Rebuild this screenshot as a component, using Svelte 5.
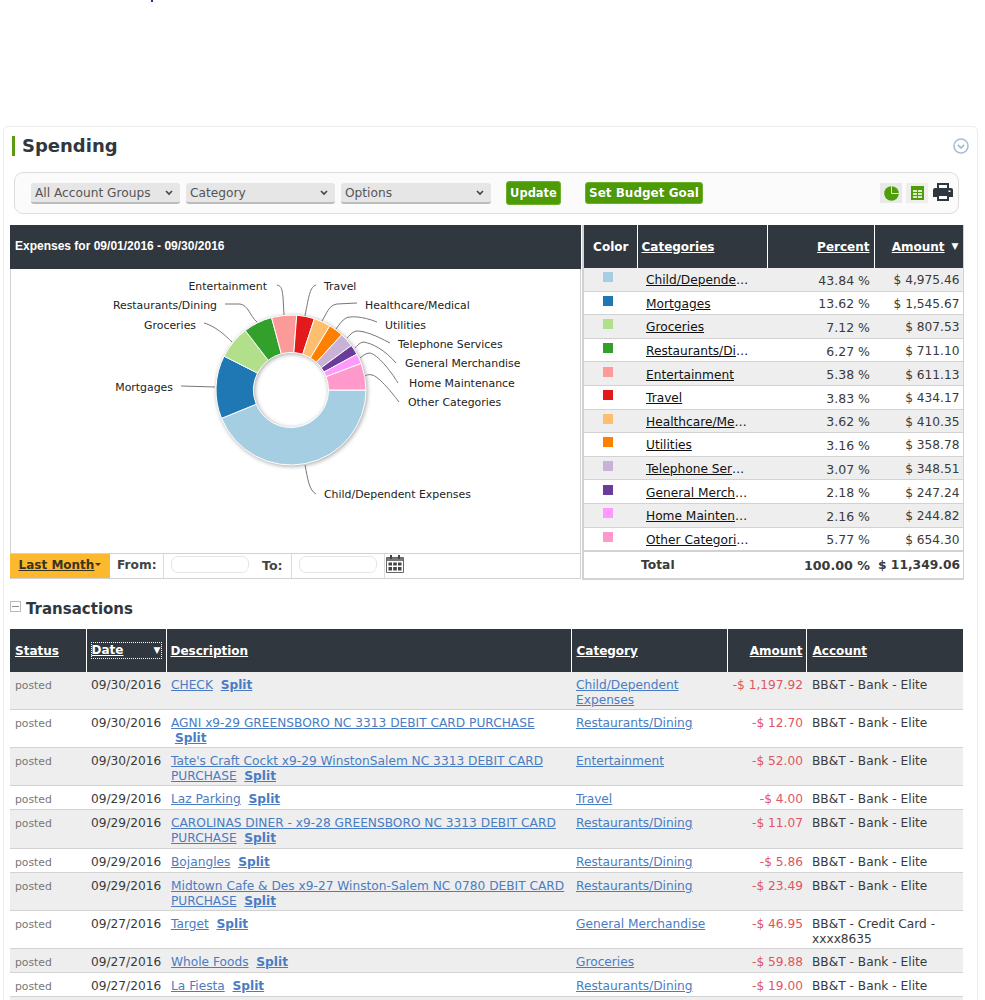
<script lang="ts">
  const slices = [
    { name: 'Child/Dependent Expenses', color: '#a6cee3', percent: 43.84, amount: '4,975.46' },
    { name: 'Mortgages', color: '#1f78b4', percent: 13.62, amount: '1,545.67' },
    { name: 'Groceries', color: '#b2df8a', percent: 7.12, amount: '807.53' },
    { name: 'Restaurants/Dining', color: '#33a02c', percent: 6.27, amount: '711.10' },
    { name: 'Entertainment', color: '#fb9a99', percent: 5.38, amount: '611.13' },
    { name: 'Travel', color: '#e31a1c', percent: 3.83, amount: '434.17' },
    { name: 'Healthcare/Medical', color: '#fdbf6f', percent: 3.62, amount: '410.35' },
    { name: 'Utilities', color: '#ff7f00', percent: 3.16, amount: '358.78' },
    { name: 'Telephone Services', color: '#cab2d6', percent: 3.07, amount: '348.51' },
    { name: 'General Merchandise', color: '#6a3d9a', percent: 2.18, amount: '247.24' },
    { name: 'Home Maintenance', color: '#ff99ff', percent: 2.16, amount: '244.82' },
    { name: 'Other Categories', color: '#ff99cc', percent: 5.77, amount: '654.30' },
  ];

  // label position and leader line, in chart coordinates
  const labels = [
    { text: 'Entertainment', x: 257, y: 17, end: true, line: 'M267 16C272 17 272 21 273 28L274 46' },
    { text: 'Restaurants/Dining', x: 207, y: 36, end: true, line: 'M215 35L230 35C238 36 240 47 247 53' },
    { text: 'Groceries', x: 186, y: 56, end: true, line: 'M194 54C205 57 215 66 222 73' },
    { text: 'Mortgages', x: 163, y: 118, end: true, line: 'M171 117L205 118' },
    { text: 'Travel', x: 314, y: 17, end: false, line: 'M306 16C300 18 299 26 295 47' },
    { text: 'Healthcare/Medical', x: 355, y: 36, end: false, line: 'M347 34L327 35C319 36 317 44 312 52' },
    { text: 'Utilities', x: 375, y: 56, end: false, line: 'M367 53C352 47 340 47 336 49C332 51 329 56 326 60' },
    { text: 'Telephone Services', x: 388, y: 75, end: false, line: 'M380 74C365 66 355 62 346 62C342 63 339 67 337 69' },
    { text: 'General Merchandise', x: 395, y: 94, end: false, line: 'M386 94C375 81 362 74 353 73C349 74 347 77 345 79' },
    { text: 'Home Maintenance', x: 399, y: 114, end: false, line: 'M388 114C380 101 368 86 360 84C355 84 353 87 350 89' },
    { text: 'Other Categories', x: 398, y: 133, end: false, line: 'M389 133C380 121 368 107 362 106C358 105 357 106 355 107' },
    { text: 'Child/Dependent Expenses', x: 314, y: 225, end: false, line: 'M295 196C298 211 299 221 306 225' },
  ];

  const cx = 281;
  const cy = 121;
  const outer = 75;
  const inner = 37.5;

  function point(r: number, a: number) {
    return `${(cx + r * Math.cos(a)).toFixed(2)} ${(cy + r * Math.sin(a)).toFixed(2)}`;
  }

  let total = slices.reduce((sum, s) => sum + s.percent, 0);
  let run = 0;
  const arcs = slices.map((s) => {
    const a0 = (run / total) * Math.PI * 2;
    run += s.percent;
    const a1 = (run / total) * Math.PI * 2;
    const large = a1 - a0 > Math.PI ? 1 : 0;
    return {
      color: s.color,
      d: `M${point(outer, a0)}A${outer} ${outer} 0 ${large} 1 ${point(outer, a1)}L${point(inner, a1)}A${inner} ${inner} 0 ${large} 0 ${point(inner, a0)}Z`,
    };
  });

  const bank = 'BB&T - Bank - Elite';
  const rows = [
    { date: '09/30/2016', desc: 'CHECK', cat: 'Child/Dependent Expenses', amount: '1,197.92', account: bank },
    { date: '09/30/2016', desc: 'AGNI x9-29 GREENSBORO NC 3313 DEBIT CARD PURCHASE', cat: 'Restaurants/Dining', amount: '12.70', account: bank },
    { date: '09/30/2016', desc: "Tate's Craft Cockt x9-29 WinstonSalem NC 3313 DEBIT CARD PURCHASE", cat: 'Entertainment', amount: '52.00', account: bank },
    { date: '09/29/2016', desc: 'Laz Parking', cat: 'Travel', amount: '4.00', account: bank },
    { date: '09/29/2016', desc: 'CAROLINAS DINER - x9-28 GREENSBORO NC 3313 DEBIT CARD PURCHASE', cat: 'Restaurants/Dining', amount: '11.07', account: bank },
    { date: '09/29/2016', desc: 'Bojangles', cat: 'Restaurants/Dining', amount: '5.86', account: bank },
    { date: '09/29/2016', desc: 'Midtown Cafe & Des x9-27 Winston-Salem NC 0780 DEBIT CARD PURCHASE', cat: 'Restaurants/Dining', amount: '23.49', account: bank },
    { date: '09/27/2016', desc: 'Target', cat: 'General Merchandise', amount: '46.95', account: 'BB&T - Credit Card - xxxx8635' },
    { date: '09/27/2016', desc: 'Whole Foods', cat: 'Groceries', amount: '59.88', account: bank },
    { date: '09/27/2016', desc: 'La Fiesta', cat: 'Restaurants/Dining', amount: '19.00', account: bank },
    { date: '09/27/2016', desc: 'Harris Teeter', cat: 'Groceries', amount: '31.26', account: bank },
  ];
</script>

<div class="page">
  <div class="top-strip"><span class="stray"></span></div>

  <section class="panel">
    <header class="panel-head">
      <h1>Spending</h1>
      <svg class="collapse" viewBox="0 0 16 16" width="16" height="16" aria-hidden="true">
        <circle cx="8" cy="8" r="7" fill="none" stroke="#a9bed3" stroke-width="1.6" />
        <path d="M4.800 6.800L8 10l3.200-3.200" fill="none" stroke="#a9bed3" stroke-width="1.8" />
      </svg>
    </header>

    <div class="toolbar">
      {#each [['All Account Groups', 149], ['Category', 149], ['Options', 150]] as [label, w]}
        <div class="select" style="width: {w}px">
          <span>{label}</span>
          <svg viewBox="0 0 8 6" width="8" height="6" aria-hidden="true"><path d="M1 1l3 3 3-3" fill="none" stroke="#444" stroke-width="1.6" /></svg>
        </div>
      {/each}
      <button class="btn update">Update</button>
      <button class="btn goal">Set Budget Goal</button>
      <div class="views">
        <span class="view">
          <svg viewBox="0 0 14 14" width="15" height="15" aria-hidden="true">
            <circle cx="7" cy="7" r="6.800" fill="#4f9d0a" />
            <path d="M7 .2V7H13.800" fill="none" stroke="#e9e9e9" stroke-width=".9" />
          </svg>
        </span>
        <span class="view table-view">
          <svg viewBox="0 0 13 14" width="13" height="14" aria-hidden="true">
            <path d="M0 0h13v14H0z" fill="#4f9d0a" />
            <path d="M2 4h4v2H2zM7 4h4v2H7zM2 7h4v2H2zM7 7h4v2H7zM2 10h4v2H2zM7 10h4v2H7z" fill="#dcebc8" />
          </svg>
        </span>
        <svg class="printer" viewBox="0 0 20 18" width="20" height="18" aria-hidden="true">
          <path d="M5 1h10v5H5z" fill="#fff" stroke="#2f363d" stroke-width="2" />
          <path d="M2 5h16a2 2 0 0 1 2 2v7h-4v-3H4v3H0V7a2 2 0 0 1 2-2z" fill="#2f363d" />
          <path d="M5 12h10v5H5z" fill="#fff" stroke="#2f363d" stroke-width="2" />
          <path d="M15.500 7.500h2v1.500h-2z" fill="#fff" />
        </svg>
      </div>
    </div>

    <div class="report">
      <div class="chart-box">
        <div class="chart-title">Expenses for 09/01/2016 - 09/30/2016</div>
        <svg class="chart" viewBox="1 0 569 284" width="569" height="284" role="img" aria-label="Spending by category">
          <g class="pie">
            {#each arcs as arc}
              <path d={arc.d} fill={arc.color} stroke="#fff" stroke-width="1" />
            {/each}
          </g>
          {#each labels as l}
            <path d={l.line} fill="none" stroke="#777" stroke-width="1" />
            <text x={l.x} y={l.y + 4} text-anchor={l.end ? 'end' : 'start'}>{l.text}</text>
          {/each}
        </svg>
        <div class="range">
          <span class="last-month">Last Month<i></i></span>
          <span class="range-label from">From:</span>
          <span class="range-cell wide">
            <i class="range-input"></i>
            <span class="range-label to">To:</span>
          </span>
          <span class="range-cell">
            <i class="range-input"></i>
          </span>
          <span class="cal">
            <svg viewBox="0 0 18 18" width="18" height="18" aria-hidden="true">
              <path d="M.5 2.500h17v15H.5z" fill="#fff" stroke="#666" />
              <path d="M1 3h16v3H1z" fill="#777" />
              <path d="M4 0h2v4H4zM12 0h2v4h-2z" fill="#444" />
              <path d="M2.500 7.500h3.500v3h-3.500zM7.200 7.500h3.600v3H7.200zM12 7.500h3.500v3H12zM2.500 12h3.500v3.500h-3.500zM7.200 12h3.600v3.500H7.200zM12 12h3.500v3.500H12z" fill="#444" />
            </svg>
          </span>
        </div>
      </div>

      <table class="legend">
        <colgroup><col style="width: 54px" /><col style="width: 130px" /><col style="width: 107px" /><col style="width: 89px" /></colgroup>
        <thead>
          <tr>
            <th class="color-head">Color</th>
            <th class="left"><u>Categories</u></th>
            <th class="right"><u>Percent</u></th>
            <th class="right"><u>Amount</u><span class="sort">▼</span></th>
          </tr>
        </thead>
        <tbody>
          {#each slices as s, i}
            <tr class:alt={i % 2 === 0}>
              <td><span class="swatch" style="background: {s.color}"></span></td>
              <td class="cat-cell"><span class="cat-name"><u>{s.name}</u></span></td>
              <td class="right percent">{s.percent.toFixed(2)} %</td>
              <td class="right">$ {s.amount}</td>
            </tr>
          {/each}
        </tbody>
        <tfoot>
          <tr>
            <td></td>
            <td class="total-label">Total</td>
            <td class="right percent">100.00 %</td>
            <td class="right">$ 11,349.06</td>
          </tr>
        </tfoot>
      </table>
    </div>

    <h2 class="tx-title"><span class="minus"></span>Transactions</h2>

    <table class="tx">
      <colgroup>
        <col style="width: 76px" /><col style="width: 80px" /><col style="width: 405px" /><col style="width: 156px" /><col style="width: 79px" /><col style="width: 157px" />
      </colgroup>
      <thead>
        <tr>
          <th><u>Status</u></th>
          <th class="date-head"><span class="focus"><u>Date</u><i>▼</i></span></th>
          <th class="desc-head"><u>Description</u></th>
          <th><u>Category</u></th>
          <th class="right"><u>Amount</u></th>
          <th><u>Account</u></th>
        </tr>
      </thead>
      <tbody>
        {#each rows as r, i}
          <tr class:alt={i % 2 === 0}>
            <td class="status">posted</td>
            <td>{r.date}</td>
            <td class="link"><u>{r.desc}</u> &nbsp;<b>Split</b></td>
            <td class="link"><u>{r.cat}</u></td>
            <td class="right neg">-$ {r.amount}</td>
            <td>{r.account}</td>
          </tr>
        {/each}
      </tbody>
    </table>
  </section>
</div>

<style>
  :global(body) {
    margin: 0;
    background: #fff;
    overflow: hidden;
  }

  .page {
    height: 1000px;
    overflow: hidden;
    font-family: "DejaVu Sans", Verdana, sans-serif;
    font-size: 12.2px;
    color: #333;
  }

  .top-strip {
    height: 126px;
  }

  .stray {
    display: block;
    width: 2px;
    height: 2px;
    margin-left: 151px;
    background: #2a2a90;
  }

  .panel {
    margin-left: 3px;
    width: 975px;
    box-sizing: border-box;
    border: 1px solid #ececec;
    border-radius: 5px;
    padding: 8px 14px 0 6px;
  }

  .panel-head {
    display: flex;
    justify-content: space-between;
    align-items: center;
    height: 21px;
    padding-left: 2px;
    margin-right: -9px;
  }

  h1 {
    margin: 0;
    padding-left: 7px;
    border-left: 3px solid #5a9a14;
    font-size: 18px;
    line-height: 20px;
    color: #31373e;
  }

  .collapse {
    margin-right: 3px;
  }

  .toolbar {
    display: flex;
    align-items: center;
    box-sizing: border-box;
    height: 42px;
    width: 945px;
    margin: 16px 0 11px 4px;
    padding: 0 5px 0 16px;
    background: #fbfbfb;
    border: 1px solid #ddd;
    border-radius: 9px;
  }

  .select {
    display: flex;
    justify-content: space-between;
    align-items: center;
    box-sizing: border-box;
    height: 21px;
    margin-right: 6px;
    padding: 1px 7px 0 4px;
    background: #e6e6e6;
    border-bottom: 2px solid #bbb;
    border-radius: 3px;
    color: #555;
  }

  .btn {
    height: 24px;
    padding: 0;
    font-family: inherit;
    font-weight: bold;
    color: #fff;
    background: #4d9c05;
    border: 1px solid #6fb02f;
    border-radius: 3px;
    text-shadow: 0 0 1px #2f6a00;
  }

  .update {
    width: 55px;
    margin-left: 9px;
    font-size: 11.5px;
  }

  .goal {
    width: 118px;
    height: 22px;
    margin-left: 24px;
    font-size: 12px;
  }

  .views {
    display: flex;
    align-items: center;
    gap: 4px;
    margin-left: auto;
  }

  .view {
    display: flex;
    align-items: center;
    justify-content: center;
    width: 22px;
    height: 20px;
    background: #e9e9e9;
  }

  .table-view {
    background: #eeeeea;
  }

  .printer {
    margin: -3px 0 0 1px;
  }

  .report {
    display: flex;
    gap: 1px;
    width: 953px;
  }

  .chart-box {
    box-sizing: border-box;
    width: 571px;
    height: 354px;
    border: 1px solid #d2d2d2;
    border-top: 0;
    display: flex;
    flex-direction: column;
  }

  .chart-title {
    flex: none;
    height: 44px;
    margin: 0 -1px;
    padding-left: 5px;
    line-height: 42px;
    background: #31373e;
    font-family: "Liberation Sans", Arial, sans-serif;
    font-size: 12px;
    font-weight: bold;
    color: #fff;
  }

  .chart {
    display: block;
    flex: none;
  }

  .chart text {
    font-size: 10.9px;
    fill: #222;
  }

  .pie {
    filter: drop-shadow(1px 1px 2px rgba(0, 0, 0, 0.35));
  }

  .range {
    display: flex;
    align-items: stretch;
    flex: none;
    box-sizing: border-box;
    height: 25px;
    margin: 0 -1px;
    border-top: 1px solid #d2d2d2;
    font-weight: bold;
  }

  .last-month {
    width: 100px;
    text-align: center;
    line-height: 23px;
    background: #fdb92e;
    color: #3a3320;
    text-decoration: underline;
    font-size: 12px;
  }

  .last-month i {
    display: inline-block;
    vertical-align: middle;
    margin: 0 0 2px 1px;
    border: 3px solid transparent;
    border-top-color: #3a3320;
    border-bottom: 0;
  }

  .range-label {
    line-height: 23px;
    color: #444;
  }

  .from {
    width: 54px;
    padding-left: 7px;
    box-sizing: border-box;
    border-right: 1px solid #ddd;
  }

  .to {
    margin: -2px 0 0 13px;
    font-size: 12.6px;
  }

  .range-cell {
    display: flex;
    align-items: flex-start;
    box-sizing: border-box;
    width: 93px;
    padding: 2px 0 0 7px;
    border-right: 1px solid #ddd;
  }

  .range-cell.wide {
    width: 128px;
  }

  .range-input {
    flex: none;
    box-sizing: border-box;
    width: 78px;
    height: 17px;
    background: #fff;
    border: 1px solid #e6e6e6;
    border-radius: 7px;
  }

  .cal {
    padding-top: 1px;
    margin-left: 1px;
  }

  table {
    border-collapse: collapse;
    table-layout: fixed;
  }

  th {
    background: #31373e;
    color: #fff;
    font-size: 12px;
    text-align: left;
    padding: 0 4px 0 5px;
    border-left: 1px solid #fff;
  }

  th:first-child {
    border-left: 0;
  }

  .right {
    text-align: right;
  }

  .legend {
    width: 381px;
    height: 354px;
    border-left: 2px solid #d2d2d2;
    border-right: 1px solid #d2d2d2;
    border-bottom: 2px solid #d2d2d2;
  }

  .legend thead tr {
    height: 43px;
  }

  .legend th.left {
    padding-left: 4px;
  }

  .color-head {
    text-align: center;
  }

  .sort {
    font-size: 9px;
    margin-left: 7px;
    vertical-align: 2px;
  }

  .legend td {
    padding: 0 3px 0 4px;
    height: 22.6px;
    color: #3a3a3a;
    border-bottom: 1px solid #d2d2d2;
    white-space: nowrap;
  }

  .legend tbody .right,
  .legend tbody .cat-cell {
    padding-top: 2px;
    height: 20.6px;
  }

  .legend tbody .percent {
    font-size: 12.5px;
  }

  .legend td.percent {
    padding-right: 4px;
  }

  .alt td {
    background: #eee;
  }

  .swatch {
    display: block;
    width: 10px;
    height: 10px;
    margin: -4px 0 0 15px;
  }

  .legend .cat-cell {
    color: #111;
    padding-left: 9px;
  }

  .cat-name {
    display: block;
    width: 103px;
    overflow: hidden;
    text-overflow: ellipsis;
  }

  .legend tfoot td {
    height: 26px;
    font-weight: bold;
    font-size: 12.3px;
    border-top: 2px solid #d2d2d2;
    border-bottom: 0;
  }

  .legend tfoot .percent {
    font-size: 12.7px;
  }

  .legend .total-label {
    padding-left: 4px;
  }

  .tx-title {
    position: relative;
    margin: 20px 0 11px;
    padding-left: 16px;
    font-size: 15px;
    line-height: 18px;
    color: #31373e;
  }

  .minus {
    position: absolute;
    left: 0;
    top: 1px;
    width: 9px;
    height: 9px;
    border: 1px solid #bbb;
  }

  .minus::after {
    content: "";
    position: absolute;
    left: 1px;
    right: 1px;
    top: 4px;
    height: 1px;
    background: #888;
  }

  .tx {
    width: 953px;
  }

  .tx thead tr {
    height: 43px;
  }

  .tx tbody tr {
    height: 24px;
  }

  .tx th.right {
    padding-right: 3px;
  }

  .tx th.desc-head {
    padding-left: 4px;
  }

  .focus {
    display: flex;
    justify-content: space-between;
    height: 15px;
    line-height: 15px;
    border: 1px dotted #fff;
    margin-left: -1px;
  }

  .focus i {
    font-size: 9px;
    font-style: normal;
  }

  .tx td {
    padding: 6px 4px 1px 5px;
    line-height: 15px;
    vertical-align: top;
    color: #3a3a3a;
    border-bottom: 1px solid #d2d2d2;
  }

  .tx tbody tr:nth-child(5) td {
    padding-bottom: 2px;
  }

  .tx td.right {
    padding-right: 3px;
  }

  .tx td:last-child,
  .tx th:last-child {
    padding-left: 6px;
  }

  .tx .status {
    color: #777;
    font-size: 10.8px;
  }

  .tx .link {
    color: #4a7cc4;
  }

  .tx .link b {
    text-decoration: underline;
  }

  .tx .neg {
    color: #e0555f;
  }
</style>
